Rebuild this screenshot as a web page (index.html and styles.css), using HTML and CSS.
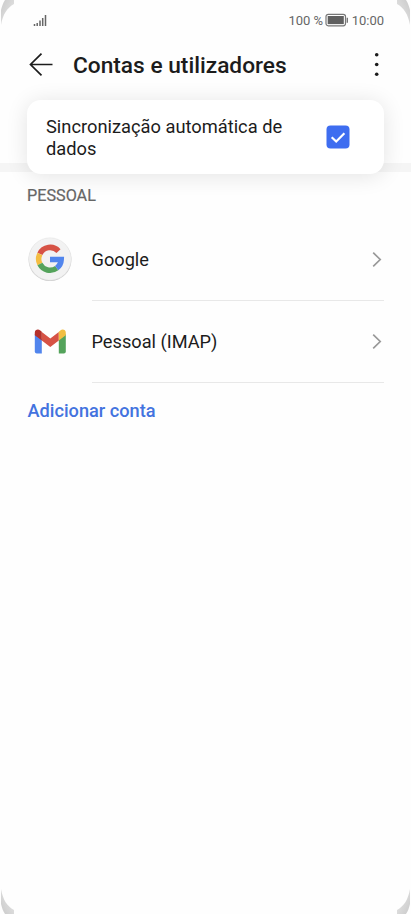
FILE: index.html
```
<!DOCTYPE html>
<html lang="pt">
<head>
<meta charset="utf-8">
<title>Contas e utilizadores</title>
<link rel="stylesheet" href="styles.css">
</head>
<body>
<main class="screen">
  <svg class="defs" width="0" height="0"><defs><linearGradient id="edge" x1="0" y1="0" x2="1" y2="1"><stop offset="0" stop-color="#cacaca"/><stop offset="1" stop-color="#eaeaea"/></linearGradient></defs></svg>
  <svg class="corner top-left" viewBox="0 0 14 28"><path d="M5 0H14V4C7 8 3 14 1 25V10C2 6 3 3 5 0Z"/></svg>
  <svg class="corner top-right" viewBox="0 0 14 28"><path d="M5 0H14V4C7 8 3 14 1 25V10C2 6 3 3 5 0Z"/></svg>
  <svg class="corner bottom-left" viewBox="0 0 14 28"><path d="M5 0H14V4C7 8 3 14 1 25V10C2 6 3 3 5 0Z"/></svg>
  <svg class="corner bottom-right" viewBox="0 0 14 28"><path d="M5 0H14V4C7 8 3 14 1 25V10C2 6 3 3 5 0Z"/></svg>
  <div class="status">
    <svg class="signal" width="14" height="13" viewBox="0 0 14 13"><path d="M1.500 10v2M4.200 9v3M7 6.500v5.500M9.700 4v8M12.500 1v11" stroke="#666" stroke-width="1.500"/></svg>
    <span class="percent">100 %</span>
    <svg class="battery" width="24" height="14" viewBox="0 0 24 14"><rect x="1" y="1.300" width="19.500" height="11.500" rx="2.200" fill="none" stroke="#777" stroke-width="1.200"/><rect x="2.700" y="3" width="16.100" height="8.100" fill="#606060"/><path d="M22.300 4.800v5" stroke="#777" stroke-width="1.400"/></svg>
    <span class="time">10:00</span>
  </div>
  <header class="bar">
    <svg class="back" width="24" height="24" viewBox="0 0 24 24"><path d="M12.500 .7 1.500 11.500l11 10.800M1.500 11.500h22" fill="none" stroke="#1c1c1c" stroke-width="1.700"/></svg>
    <h1 class="title">Contas e utilizadores</h1>
    <svg class="more" width="6" height="26" viewBox="0 0 6 26"><g fill="#1c1c1c"><circle cx="2.700" cy="2.700" r="1.800"/><circle cx="2.700" cy="12.500" r="1.800"/><circle cx="2.700" cy="22.300" r="1.800"/></g></svg>
  </header>
  <section class="sync">
    <div class="card">
      <span class="sync-label">Sincronização automática de dados</span>
      <svg class="check" width="24" height="24" viewBox="0 0 24 24"><rect x=".5" y=".5" width="23" height="23" rx="4" fill="#3e6df0"/><path d="m5.700 12.200 4.500 4.300 8.200-8.200" fill="none" stroke="#fff" stroke-width="2.200"/></svg>
    </div>
  </section>
  <h2 class="section-title">PESSOAL</h2>
  <div class="row">
    <svg class="logo" width="46" height="46" viewBox="0 0 46 46"><circle cx="23" cy="22.700" r="21.400" fill="#c9c9c9"/><circle cx="23" cy="22" r="21.200" fill="#f2f2f2" stroke="#e2e2e2" stroke-width=".5"/>
      <g transform="translate(0 -1)" fill="none" stroke-width="5.500"><path d="M31.500 15.100A11.300 11.300 0 0 0 12.900 17.900" stroke="#d65245"/><path d="M12.900 17.900A11.300 11.300 0 0 0 12.900 28.100" stroke="#f4bd42"/><path d="M12.900 28.100A11.300 11.300 0 0 0 29.700 32.100" stroke="#54a35b"/><path d="M29.700 32.100A11.300 11.300 0 0 0 34.200 23.600H23" stroke="#5185ed"/></g></svg>
    <div class="row-main"><span>Google</span><svg class="chevron" width="10" height="16" viewBox="0 0 10 16"><path d="m1.200 .7 7 6.800-7 6.800"/></svg></div>
  </div>
  <div class="row">
    <svg class="logo" width="46" height="46" viewBox="0 0 46 46"><path d="M7.800 15v17.500a2 2 0 0 0 2 2h5V20Z" fill="#5185ed"/><path d="M31.800 20v14.500h5a2 2 0 0 0 2-2V15Z" fill="#54a35b"/><path d="M14.800 13 23.300 19.400 31.800 13v8.400L23.300 27.900 14.800 21.400Z" fill="#d65245"/><path d="M7.800 16.200v-2.500c0-3 3.300-4 5.500-2.200l1.500 1.200v8.700Z" fill="#b5302a"/><path d="M38.800 16.200v-2.500c0-3-3.300-4-5.500-2.200l-1.500 1.200v8.700Z" fill="#f1be42"/></svg>
    <div class="row-main"><span>Pessoal (IMAP)</span><svg class="chevron" width="10" height="16" viewBox="0 0 10 16"><path d="m1.200 .7 7 6.800-7 6.800"/></svg></div>
  </div>
  <a class="add">Adicionar conta</a>
</main>
</body>
</html>
```
FILE: styles.css
```
* { box-sizing: border-box; }
body { margin: 0; background: #fefefe; font-family: Roboto, sans-serif; color: #1c1c1c; }
.screen { position: relative; height: 914px; overflow: hidden; }
.defs { position: absolute; }
.corner { position: absolute; width: 14px; height: 28px; fill: url(#edge); }
.top-left { top: 0; left: 0; }
.top-right { top: 0; right: 0; transform: scaleX(-1); }
.bottom-left { bottom: 0; left: 0; transform: scaleY(-1); }
.bottom-right { bottom: 0; right: 0; transform: scale(-1); }
.status { display: flex; align-items: center; height: 40px; padding: 0 27px 0 33px; color: #666; font-size: 13px; }
.percent { margin-left: auto; }
.battery { margin: 0 3px 0 1.500px; }
.bar { display: flex; align-items: center; height: 49px; padding: 0 31px 0 29px; }
.title { margin: 0 auto 0 20px; padding-top: 2px; font-size: 22.700px; font-weight: 500; line-height: 28px; white-space: nowrap; }
.sync { height: 83px; padding: 11px 27px 0; border-bottom: 9px solid #f5f5f5; }
.card { position: relative; display: flex; align-items: center; justify-content: space-between; height: 74px; padding: 2px 34px 0 19px; border-radius: 14px; background: #fff; box-shadow: 0 2px 22px rgba(0, 0, 0, .11); }
.sync-label { width: 250px; font-size: 18.300px; line-height: 22px; }
.check { margin-bottom: 2px; }
.section-title { margin: 13px 27px 12px; font-size: 16.200px; line-height: 22px; font-weight: 400; color: #666; -webkit-text-stroke: .2px #666; }
.row { display: flex; align-items: center; height: 82px; padding: 0 27px; }
.logo { flex: none; margin-right: 18.500px; }
.row-main { display: flex; flex: 1; align-items: center; justify-content: space-between; height: 82px; border-bottom: 1px solid #e8e8e8; font-size: 18.200px; }
.chevron { margin-right: 2px; fill: none; stroke: #999; stroke-width: 1.700; }
.add { display: block; margin: 17px 27.500px; font-size: 18.200px; line-height: 22px; font-weight: 500; color: #4373df; }
```
